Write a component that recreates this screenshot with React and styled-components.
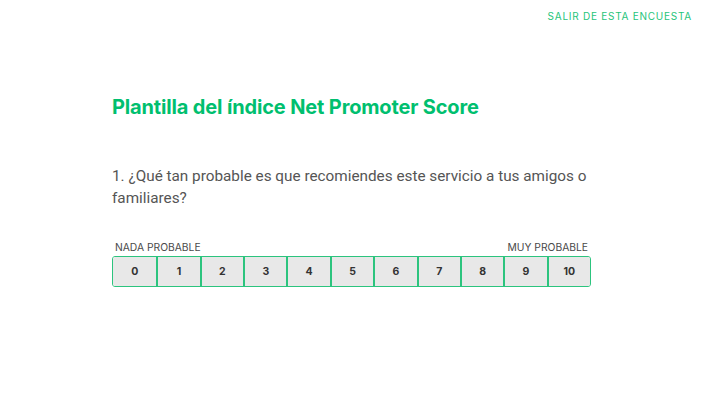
import React from 'react';
import styled, { createGlobalStyle } from 'styled-components';

const Global = createGlobalStyle`
  html, body {
    margin: 0;
    padding: 0;
    background: #ffffff;
  }
  body {
    font-family: "Roboto", "Liberation Sans", sans-serif;
  }
`;

const Page = styled.div`
  width: 702px;
  height: 400px;
  display: flex;
  flex-direction: column;
  background: #ffffff;
`;

const TopBar = styled.div`
  height: 32px;
  display: flex;
  justify-content: flex-end;
  align-items: center;
  padding-right: 10px;
`;

const ExitLink = styled.a`
  font-family: "Inter", "Liberation Sans", sans-serif;
  font-size: 10px;
  letter-spacing: 0.75px;
  color: #1fc47a;
  text-transform: uppercase;
  text-decoration: none;
  cursor: pointer;
`;

const Content = styled.div`
  width: 479px;
  margin-left: 112px;
  display: flex;
  flex-direction: column;
`;

const Title = styled.h1`
  margin: 62px 0 0 0;
  font-family: "Inter", "Liberation Sans", sans-serif;
  font-size: 20px;
  font-weight: 700;
  letter-spacing: -0.15px;
  color: #00bf6f;
  line-height: 26px;
`;

const Question = styled.p`
  margin: 45px 0 0 0;
  font-family: "Roboto", "Liberation Sans", sans-serif;
  font-size: 15.3px;
  line-height: 22px;
  color: #555555;
  width: 490px;
`;

const Labels = styled.div`
  margin-top: 32px;
  display: flex;
  justify-content: space-between;
  padding: 0 3px;
  font-family: "Inter", "Liberation Sans", sans-serif;
  font-size: 10.3px;
  color: #4a4a4a;
  text-transform: uppercase;
  line-height: 12px;
`;

const Scale = styled.div`
  margin-top: 3px;
  display: grid;
  grid-template-columns: repeat(11, 1fr);
  border: 1.5px solid #2cc47e;
  border-radius: 3px;
  overflow: hidden;
  height: 29px;
`;

const Cell = styled.button`
  border: none;
  border-left: ${p => (p.$first ? 'none' : '2px solid #2cc47e')};
  background: #e8e8e8;
  font-family: "Inter", "Liberation Sans", sans-serif;
  font-size: 10.5px;
  font-weight: 700;
  color: #333333;
  padding: 0;
  cursor: pointer;
`;

export default function App() {
  const values = [0, 1, 2, 3, 4, 5, 6, 7, 8, 9, 10];
  return (
    <Page>
      <Global />
      <TopBar>
        <ExitLink>Salir de esta encuesta</ExitLink>
      </TopBar>
      <Content>
        <Title>Plantilla del índice Net Promoter Score</Title>
        <Question>
          1. ¿Qué tan probable es que recomiendes este servicio a tus amigos o familiares?
        </Question>
        <Labels>
          <span>Nada probable</span>
          <span>Muy probable</span>
        </Labels>
        <Scale>
          {values.map(v => (
            <Cell key={v} $first={v === 0}>{v}</Cell>
          ))}
        </Scale>
      </Content>
    </Page>
  );
}
